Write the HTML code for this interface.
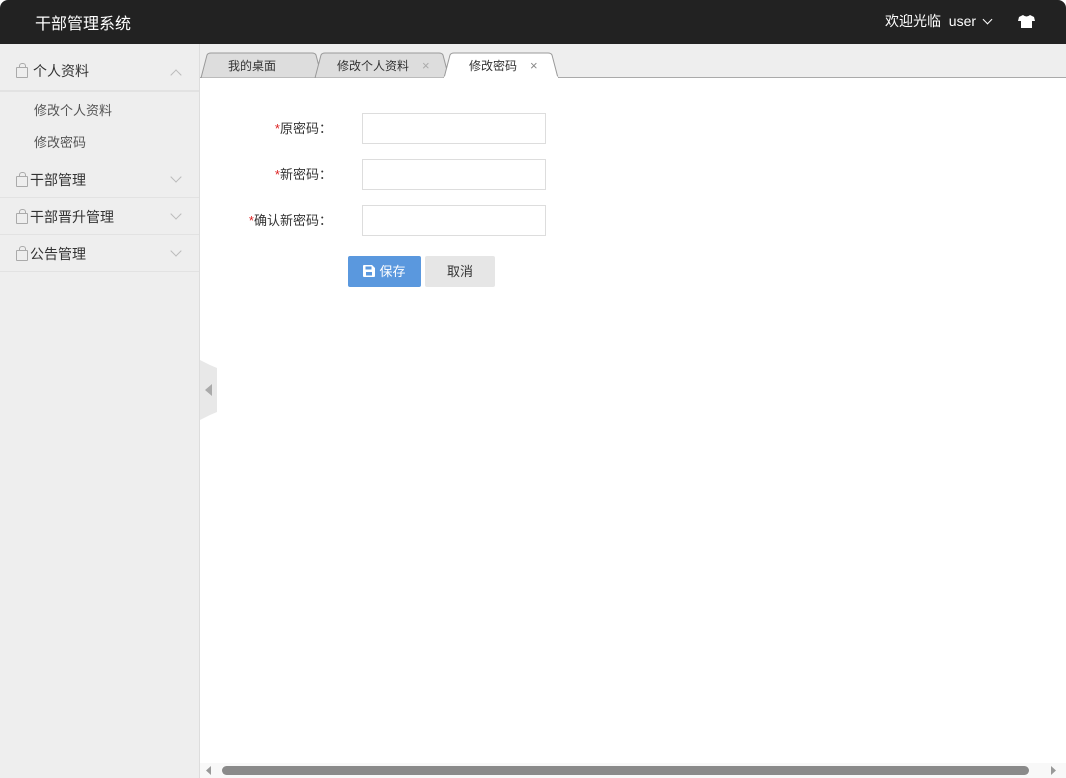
<!DOCTYPE html>
<html><head><meta charset="utf-8"><style>
*{margin:0;padding:0;box-sizing:border-box}
body{width:1066px;height:778px;overflow:hidden;background:#fff;font-family:"Liberation Sans","Noto Sans CJK SC",sans-serif;font-size:13px;color:#333;position:relative}
.hd{position:absolute;left:0;top:0;width:1066px;height:44px;background:#222;border-radius:8px 8px 0 0;color:#fff}
.logo{position:absolute;left:35px;top:10px;font-size:16px}
.wel{position:absolute;left:885px;top:11px;font-size:14px}
.side{position:absolute;left:0;top:44px;width:200px;height:734px;background:#eee;border-right:1px solid #ddd}
.m{height:37px;border-bottom:1px solid #e2e2e2;position:relative;font-size:14px;line-height:37px;padding-left:30px;color:#333}
.m .ic{position:absolute;left:16px;top:14px;width:12px;height:11px;border:1px solid #aaa;border-radius:1px}
.m .ic:before{content:"";position:absolute;left:2px;top:-5px;width:5px;height:4px;border:1px solid #aaa;border-bottom:0;border-radius:3px 3px 0 0}
.m .ar{position:absolute;left:172px;top:12px;width:8px;height:8px;border-right:1px solid #bbb;border-bottom:1px solid #bbb;transform:rotate(45deg)}
.m .up{top:17px;transform:rotate(-135deg)}
.sub{height:32px;line-height:32px;padding-left:34px;color:#555;font-size:13px}
.tabs{position:absolute;left:200px;top:44px;width:866px;height:34px;background:#eee;border-bottom:1px solid #aaa}
.lbl{position:absolute;width:130px;text-align:right;left:202px;font-size:13px}
.lbl b{color:#d22;font-weight:normal}
.inp{position:absolute;left:362px;width:184px;height:31px;border:1px solid #ddd}
.btn{position:absolute;top:256px;height:31px;border-radius:2px;line-height:31px;text-align:center;font-size:13px}
</style></head><body>
<div class="hd"><div class="logo">干部管理系统</div>
<div class="wel">欢迎光临&nbsp; user <span style="display:inline-block;width:7px;height:7px;border-right:1.5px solid #fff;border-bottom:1.5px solid #fff;transform:rotate(45deg);margin:0 0 3px 4px"></span></div>
<svg style="position:absolute;left:1018px;top:15px" width="17" height="13" viewBox="0 0 17 13"><path d="M5 0 L1 2 L0 6 L3 6 L3 13 L14 13 L14 6 L17 6 L16 2 L12 0 Q8.5 3 5 0Z" fill="#fff"/></svg>
</div>
<div class="side">
<div class="m" style="height:47px;line-height:55px;padding-left:33px"><span class="ic" style="top:23px"></span>个人资料<span class="ar up" style="top:27px"></span></div>
<div style="border-bottom:1px solid #e2e2e2;height:0"></div>
<div style="padding-top:3px"><div class="sub">修改个人资料</div><div class="sub">修改密码</div></div>
<div class="m" style="margin-top:2px;line-height:39px"><span class="ic" style="top:15px"></span>干部管理<span class="ar"></span></div>
<div class="m" style="line-height:39px"><span class="ic" style="top:15px"></span>干部晋升管理<span class="ar"></span></div>
<div class="m" style="line-height:39px"><span class="ic" style="top:15px"></span>公告管理<span class="ar"></span></div>
</div>
<div class="tabs">
<svg width="866" height="34" style="position:absolute;left:0;top:0">
<path d="M1 34 L7 11 Q8 9 11 9 L112 9 Q115 9 116 11 L122 34Z" fill="#ddd" stroke="#999"/>
<path d="M115 34 L121 11 Q122 9 125 9 L239 9 Q242 9 243 11 L249 34Z" fill="#ddd" stroke="#999"/>
<path d="M244 34 L250 11 Q251 9 254 9 L348 9 Q351 9 352 11 L358 34Z" fill="#fff" stroke="#999"/>
<line x1="244" y1="33.5" x2="358" y2="33.5" stroke="#fff" stroke-width="2"/>
<text x="28" y="26" font-size="12" fill="#333" font-family="Liberation Sans,Noto Sans CJK SC,sans-serif">我的桌面</text>
<text x="137" y="26" font-size="12" fill="#333" font-family="Liberation Sans,Noto Sans CJK SC,sans-serif">修改个人资料</text>
<text x="222" y="26" font-size="13" fill="#aaa">×</text>
<text x="269" y="26" font-size="12" fill="#333" font-family="Liberation Sans,Noto Sans CJK SC,sans-serif">修改密码</text>
<text x="330" y="26" font-size="13" fill="#888">×</text>
</svg></div>
<div class="lbl" style="top:118px"><b>*</b>原密码：</div><div class="inp" style="top:113px"></div>
<div class="lbl" style="top:164px"><b>*</b>新密码：</div><div class="inp" style="top:159px"></div>
<div class="lbl" style="top:210px"><b>*</b>确认新密码：</div><div class="inp" style="top:205px"></div>
<div class="btn" style="left:348px;width:73px;background:#5a98de;color:#fff"><svg width="12" height="12" viewBox="0 0 12 12" style="vertical-align:-1px;margin-right:4px"><path d="M0 1Q0 0 1 0L9 0 12 3 12 11Q12 12 11 12L1 12Q0 12 0 11Z" fill="#fff"/><rect x="2.5" y="1.5" width="6" height="3" fill="#5a98de"/><rect x="3" y="7" width="6" height="3.5" fill="#5a98de"/></svg>保存</div>
<div class="btn" style="left:425px;width:70px;background:#e6e6e6;color:#333">取消</div>
<svg style="position:absolute;left:200px;top:360px" width="18" height="60"><path d="M0 0 L10 5 L17 8 L17 52 L10 55 L0 60Z" fill="#e8e8e8"/><path d="M5 30 L12 24 L12 36Z" fill="#aaa"/></svg>
<div style="position:absolute;left:200px;top:763px;width:866px;height:15px;background:#f8f8f8"></div>
<div style="position:absolute;left:222px;top:766px;width:807px;height:9px;background:#8a8a8a;border-radius:5px"></div>
<svg style="position:absolute;left:206px;top:766px" width="6" height="9"><path d="M5 0 L0 4.5 L5 9Z" fill="#999"/></svg>
<svg style="position:absolute;left:1051px;top:766px" width="6" height="9"><path d="M0 0 L5 4.5 L0 9Z" fill="#999"/></svg>
</body></html>
